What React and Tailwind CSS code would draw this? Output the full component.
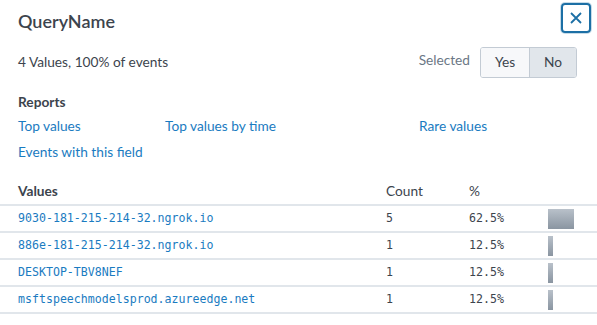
import React from "react";

const rows = [
  { v: "9030-181-215-214-32.ngrok.io", c: "5", p: "62.5%", w: 26 },
  { v: "886e-181-215-214-32.ngrok.io", c: "1", p: "12.5%", w: 5 },
  { v: "DESKTOP-TBV8NEF", c: "1", p: "12.5%", w: 5 },
  { v: "msftspeechmodelsprod.azureedge.net", c: "1", p: "12.5%", w: 5 },
];

export default function App() {
  return (
    <div
      className="w-[597px] h-[325px] bg-white text-[#3c444d] overflow-hidden"
      style={{ fontFamily: "Lato, 'Open Sans', sans-serif" }}
    >
      <div className="flex items-start justify-between pl-[18px] pr-[6px] pt-[3px]">
        <div className="pt-[7px] text-[18px] font-semibold leading-[22px]">QueryName</div>
        <button className="w-[30px] h-[30px] rounded-[4px] border-2 border-[#1c6fa5] flex items-center justify-center text-[#1c6fa5] shadow-[0_0_0_1px_rgba(28,111,165,0.25)]">
          <svg width="12" height="12" viewBox="0 0 12 12">
            <path d="M1 1L11 11M11 1L1 11" stroke="currentColor" strokeWidth="1.8" />
          </svg>
        </button>
      </div>

      <div className="flex items-center justify-between pl-[18px] pr-[20px] mt-[14px]">
        <div className="text-[13.7px]">4 Values, 100% of events</div>
        <div className="flex items-center">
          <span className="text-[13.7px] text-[#6b7785] mr-[10px] -mt-[4px]">Selected</span>
          <div className="flex h-[31px] rounded-[3px] border border-[#c3cbd4] overflow-hidden text-[13.7px]">
            <div className="w-[49px] flex items-center justify-center bg-[#f7f8fa] border-r border-[#c3cbd4]">Yes</div>
            <div className="w-[46px] flex items-center justify-center bg-[#e1e6eb]">No</div>
          </div>
        </div>
      </div>

      <div className="pl-[18px] mt-[15px]">
        <div className="text-[13.7px] font-bold leading-[17px]">Reports</div>
        <div className="flex text-[13.7px] text-[#1a7bc1] leading-[17px] mt-[7px]">
          <span className="w-[147px]">Top values</span>
          <span className="w-[254px]">Top values by time</span>
          <span>Rare values</span>
        </div>
        <div className="text-[13.7px] text-[#1a7bc1] leading-[17px] mt-[9px]">Events with this field</div>
      </div>

      <table className="mt-[18px] w-[597px] border-collapse text-[13.7px]">
        <thead>
          <tr className="h-[27px] border-b-2 border-[#e1e6eb]">
            <th className="pl-[18px] w-[386px] text-left font-bold">Values</th>
            <th className="w-[83px] text-left font-normal">Count</th>
            <th className="w-[79px] text-left font-normal">%</th>
            <th></th>
          </tr>
        </thead>
        <tbody style={{ fontFamily: "'DejaVu Sans Mono', monospace" }} className="text-[11.6px]">
          {rows.map((r) => (
            <tr key={r.v} className="h-[27px] border-b-2 border-[#e1e6eb]">
              <td className="pl-[18px] text-[#1a7bc1]">{r.v}</td>
              <td>{r.c}</td>
              <td>{r.p}</td>
              <td>
                <div
                  className="h-[20px] bg-gradient-to-b from-[#b9c1ca] to-[#8a95a1]"
                  style={{ width: r.w }}
                />
              </td>
            </tr>
          ))}
        </tbody>
      </table>
    </div>
  );
}
